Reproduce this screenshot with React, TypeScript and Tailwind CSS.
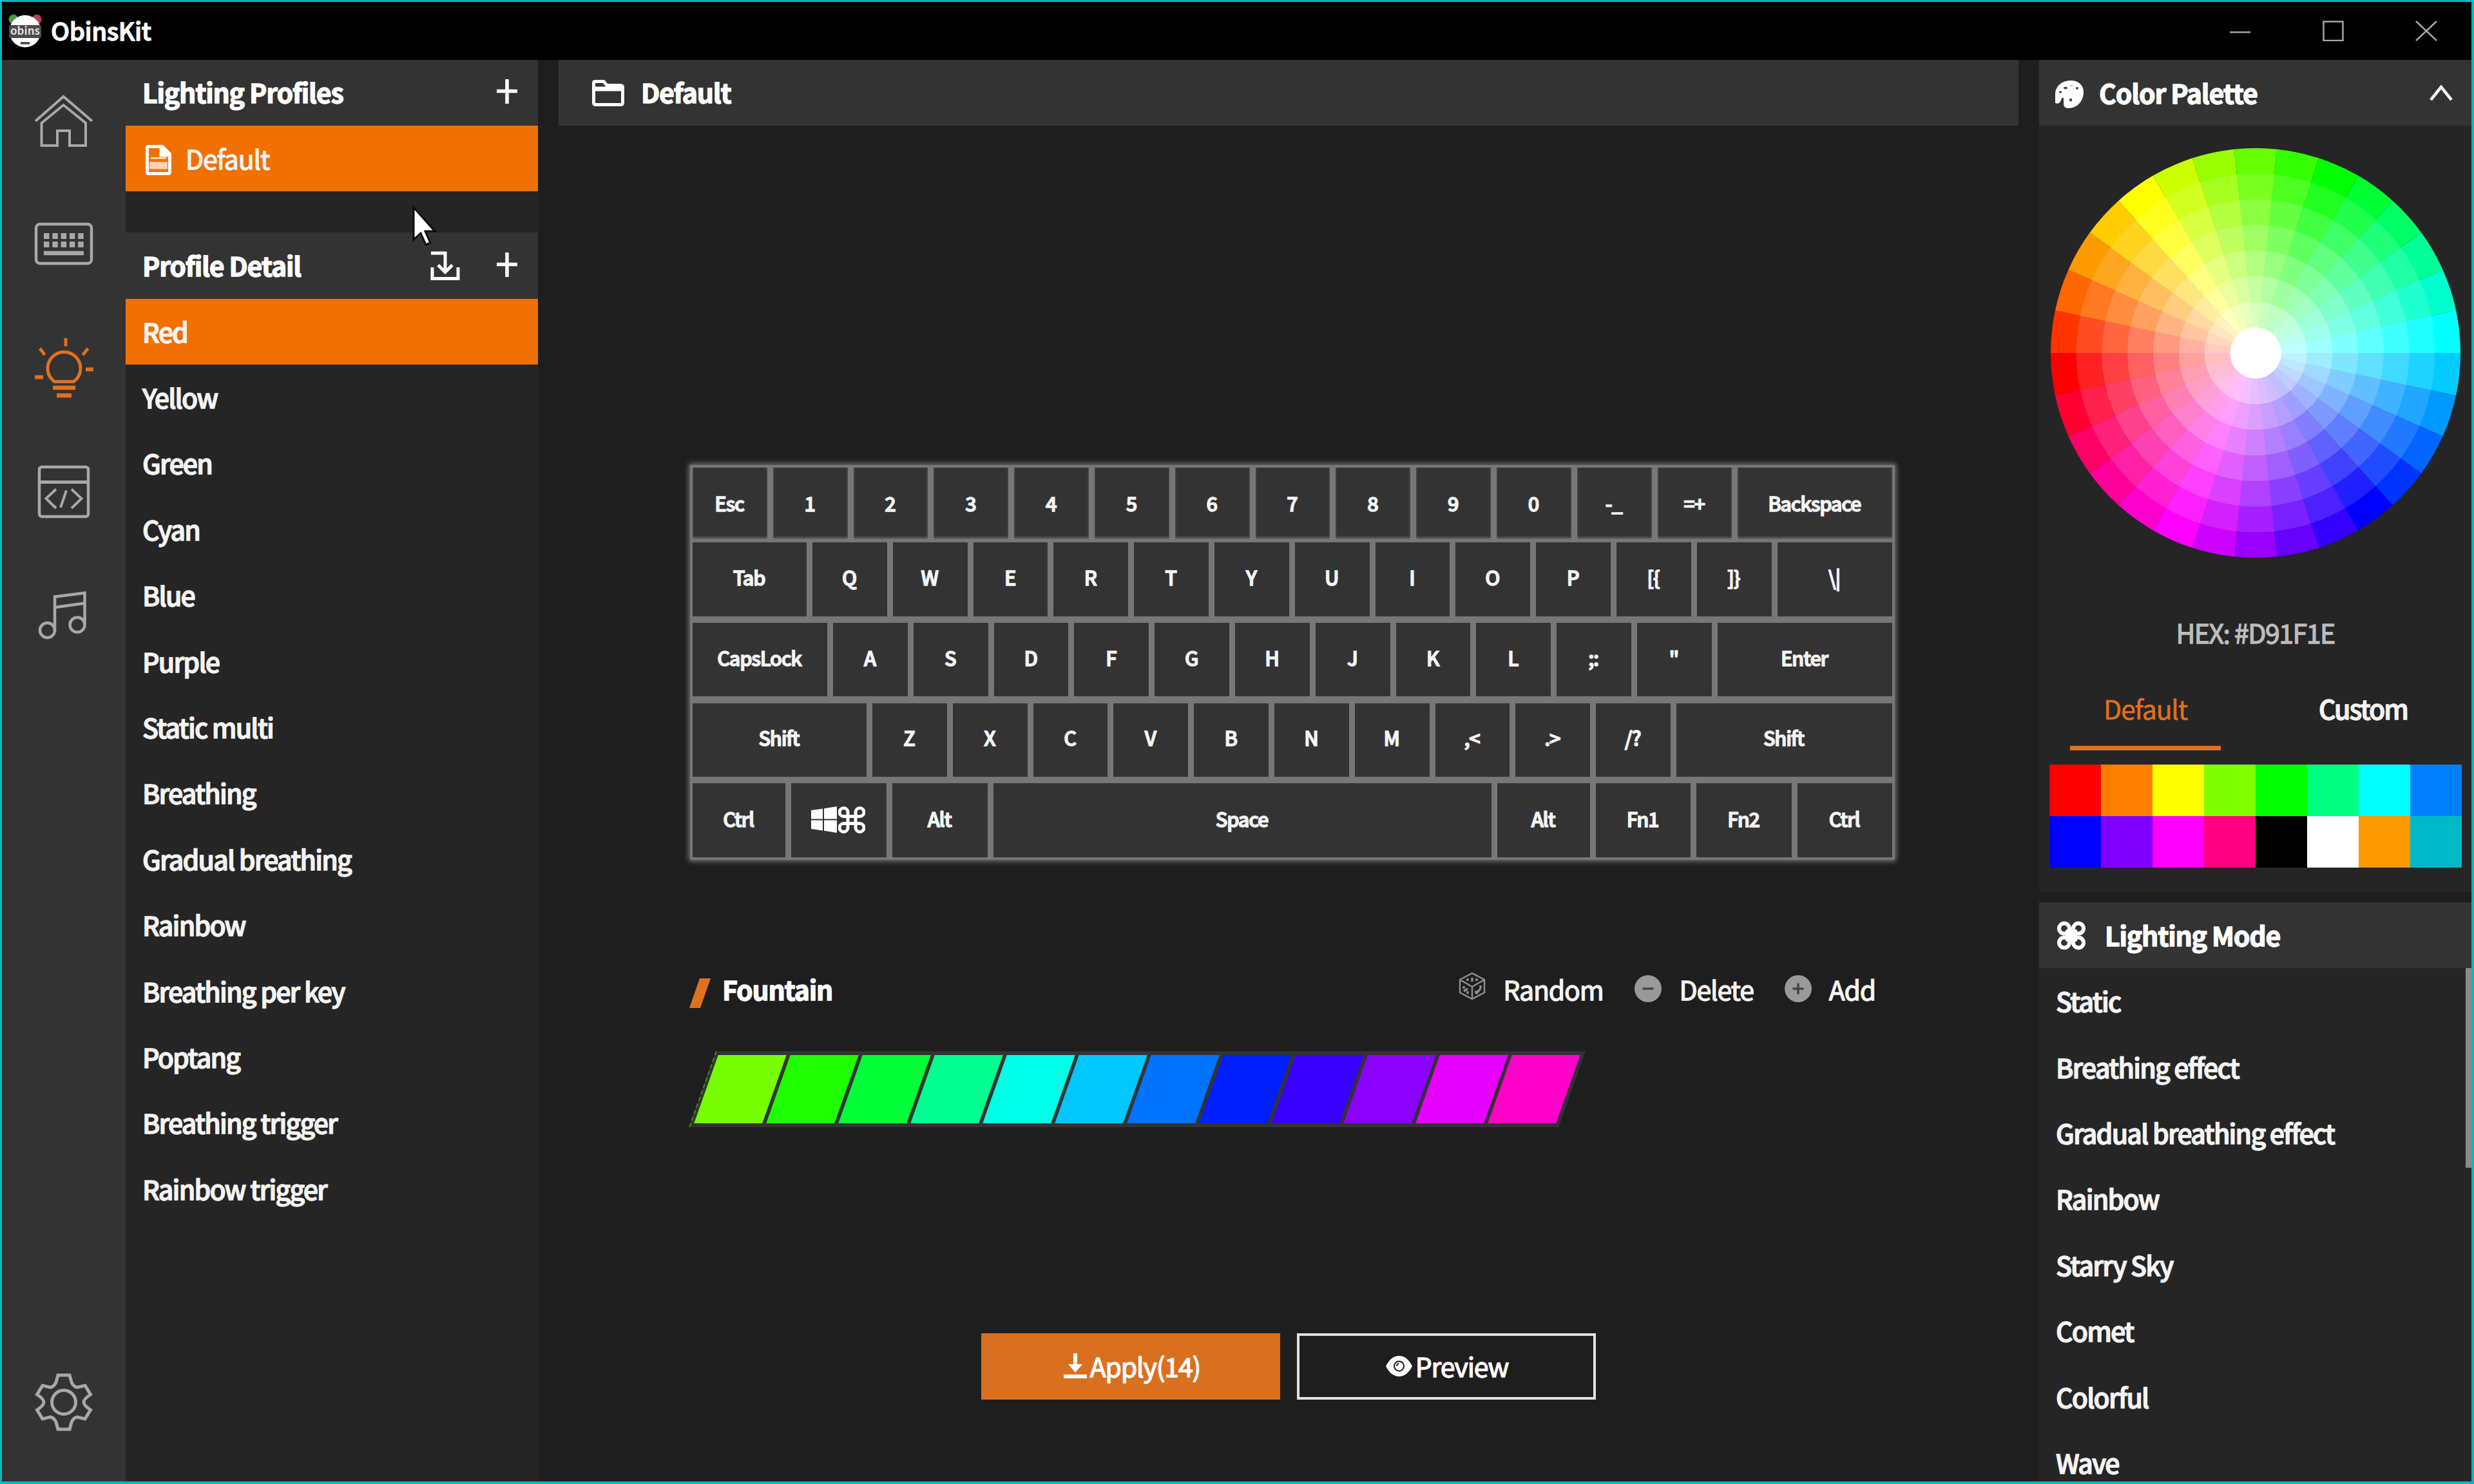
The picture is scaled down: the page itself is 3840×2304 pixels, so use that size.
import { useState } from "react";
import type { ReactNode } from "react";

const profileDetails = [
  "Red",
  "Yellow",
  "Green",
  "Cyan",
  "Blue",
  "Purple",
  "Static multi",
  "Breathing",
  "Gradual breathing",
  "Rainbow",
  "Breathing per key",
  "Poptang",
  "Breathing trigger",
  "Rainbow trigger",
];

const lightingModes = [
  "Static",
  "Breathing effect",
  "Gradual breathing effect",
  "Rainbow",
  "Starry Sky",
  "Comet",
  "Colorful",
  "Wave",
];

const swatches = [
  "bg-[#ff0000]", "bg-[#ff8000]", "bg-[#ffff00]", "bg-[#80ff00]",
  "bg-[#00ff00]", "bg-[#00ff80]", "bg-[#00ffff]", "bg-[#0080ff]",
  "bg-[#0000ff]", "bg-[#8000ff]", "bg-[#ff00ff]", "bg-[#ff0080]",
  "bg-black", "bg-white", "bg-[#ff9900]", "bg-[#00b8c8]",
];

const fountain = [
  "bg-[#77ff00]", "bg-[#1eff00]", "bg-[#00ff37]", "bg-[#00ff91]",
  "bg-[#00ffe6]", "bg-[#00c8ff]", "bg-[#0073ff]", "bg-[#001eff]",
  "bg-[#3700ff]", "bg-[#8c00ff]", "bg-[#e600ff]", "bg-[#ff00c8]",
];

type KeyDef = { label: string; w?: string };

const U = "w-[115.8px]";

const keyRows: KeyDef[][] = [
  [
    ...["Esc", "1", "2", "3", "4", "5", "6", "7", "8", "9", "0", "-_", "=+"].map((label) => ({ label })),
    { label: "Backspace", w: "flex-1" },
  ],
  [
    { label: "Tab", w: "w-[177px]" },
    ...["Q", "W", "E", "R", "T", "Y", "U", "I", "O", "P", "[{", "]}"].map((label) => ({ label })),
    { label: "\\|", w: "flex-1" },
  ],
  [
    { label: "CapsLock", w: "w-[209px]" },
    ...["A", "S", "D", "F", "G", "H", "J", "K", "L", ";:", "\""].map((label) => ({ label })),
    { label: "Enter", w: "flex-1" },
  ],
  [
    { label: "Shift", w: "w-[270px]" },
    ...["Z", "X", "C", "V", "B", "N", "M", ",<", ".>", "/?"].map((label) => ({ label })),
    { label: "Shift", w: "flex-1" },
  ],
  [
    { label: "Ctrl", w: "w-[144px]" },
    { label: "Win", w: "w-[148px]" },
    { label: "Alt", w: "w-[148px]" },
    { label: "Space", w: "flex-1" },
    { label: "Alt", w: "w-[144px]" },
    { label: "Fn1", w: "w-[147px]" },
    { label: "Fn2", w: "w-[148px]" },
    { label: "Ctrl", w: "w-[147px]" },
  ],
];

const PlusIcon = () => (
  <svg className="w-8 h-10 mb-1" viewBox="0 0 32 40" stroke="#fff" strokeWidth="5.500">
    <path d="M16 1v38M0 19.500h32" />
  </svg>
);

const CommandIcon = ({ className, stroke }: { className: string; stroke: number }) => (
  <svg className={className} viewBox="0 0 42 42" fill="none" stroke="#fff" strokeWidth={stroke}>
    <path d="M15 9v24a6.500 6.500 0 1 1-6.500-6.500h25a6.500 6.500 0 1 1-6.500 6.500v-24a6.500 6.500 0 1 1 6.500 6.500h-25a6.500 6.500 0 1 1 6.500-6.500z" />
  </svg>
);

const CloverIcon = () => (
  <svg className="w-[44px] h-[45px]" viewBox="0 0 44 45" fill="none" stroke="#fff" strokeWidth="6">
    <circle cx="11" cy="11.500" r="8" />
    <circle cx="33" cy="11.500" r="8" />
    <circle cx="11" cy="33.500" r="8" />
    <circle cx="33" cy="33.500" r="8" />
    <path d="M16 16.500h12v12h-12z" fill="#fff" />
  </svg>
);

const navIcons: { name: string; color: string; icon: ReactNode }[] = [
  {
    name: "home",
    color: "text-[#a8a8a8]",
    icon: (
      <g strokeWidth="4">
        <path d="M4 49 47.500 11 92 49" />
        <path d="M13.500 52 47.500 24 82 52V87H57V64H38V87H13.500Z" />
      </g>
    ),
  },
  {
    name: "keyboard",
    color: "text-[#a8a8a8]",
    icon: (
      <g strokeWidth="4.500">
        <rect x="5" y="17" width="86" height="61" rx="6" />
        <path d="M17 35.500h62M17 48.500h62" strokeWidth="9" strokeDasharray="8.500 4.800" />
        <path d="M17 62h62" strokeWidth="6.500" />
      </g>
    ),
  },
  {
    name: "lighting",
    color: "text-[#e0711f]",
    icon: (
      <g strokeWidth="5">
        <path d="M33.500 69.500A25.500 25.500 0 1 1 63.500 69.500Z" />
        <path d="M31 79h35M37 91h23" strokeWidth="6.500" />
        <path d="M51 2v12.500M11 18l7.500 10M85.500 18l-8 10" />
        <path d="M82 50.500h12M3 62.500h13" strokeWidth="6" />
      </g>
    ),
  },
  {
    name: "macro",
    color: "text-[#a8a8a8]",
    icon: (
      <g strokeWidth="4.500">
        <rect x="10" y="10" width="76" height="77" rx="4" />
        <path d="M10 33.500h76" strokeWidth="5" />
        <path d="M36 44.500 20.500 59 36 74M60 44.500 75.500 59 60 74M52 46.500 43 73" strokeWidth="4" />
      </g>
    ),
  },
  {
    name: "music",
    color: "text-[#a8a8a8]",
    icon: (
      <g strokeWidth="4.500">
        <circle cx="22.500" cy="71.500" r="11.500" />
        <circle cx="69" cy="63" r="11.500" />
        <path d="M34 72V19.500L80.500 13.500V63M34 36 80.500 29.500" />
      </g>
    ),
  },
];

const Rail = () => (
  <div className="w-[192px] h-full shrink-0 bg-[#333333] flex flex-col items-center justify-between pb-[27px]">
    <div className="flex flex-col -mt-[2px]">
      {navIcons.map((n) => (
        <div key={n.name} className="h-48 flex items-center justify-center">
          <svg className={`w-24 h-24 ${n.color}`} viewBox="0 0 96 96" fill="none" stroke="currentColor">
            {n.icon}
          </svg>
        </div>
      ))}
    </div>
    <div className="h-48 flex items-center">
      <svg className="w-24 h-24 text-[#a8a8a8]" viewBox="0 0 96 96" fill="none" stroke="currentColor" strokeWidth="5">
        <path d="M39 6H57L60 17Q63 24 69 25L81 22 89.500 36Q79 43 79 48 79 53 89.500 60L81 74 69 71Q63 72 60 79L57 90H39L36 79Q33 72 27 71L15 74 6.500 60Q17 53 17 48 17 43 6.500 36L15 22 27 25Q33 24 36 17Z" />
        <circle cx="48" cy="48" r="18.500" />
      </svg>
    </div>
  </div>
);

// 30 hues by 8 rings, each ring one step closer to white
const ColorWheel = () => {
  const R = 318;
  const rings = [0, 1, 2, 3, 4, 5, 6];
  const point = (deg: number, r: number) => {
    const a = (deg * Math.PI) / 180;
    return `${(R + r * Math.cos(a)).toFixed(2)} ${(R + r * Math.sin(a)).toFixed(2)}`;
  };
  return (
    <svg className="w-[636px] h-[636px]" viewBox="0 0 636 636">
      {rings.map((ring) => {
        const r = R * (1 - ring / 8);
        return Array.from({ length: 30 }, (_, i) => {
          const start = 168 + i * 12;
          return (
            <path
              key={`${ring}-${i}`}
              d={`M${R} ${R}L${point(start, r)}A${r} ${r} 0 0 1 ${point(start + 12, r)}Z`}
              fill={`hsl(${i * 12} 100% ${50 + ring * 6.25}%)`}
            />
          );
        });
      })}
      <circle cx={R} cy={R} r={R / 8} fill="#fff" />
    </svg>
  );
};

const Keyboard = () => (
  <div className="w-[1870px] bg-[#777777] p-1 flex flex-col shadow-[0_0_8px_2px_#777777]">
    {keyRows.map((row, r) => (
      <div key={r} className={`flex gap-[9px] ${r === 0 ? "h-[111px] mb-[5px]" : r === 4 ? "h-[115px]" : "h-[114.500px] mb-[10.300px]"}`}>
        {row.map((k, i) => (
          <div
            key={i}
            className={`${k.w ?? U} bg-[#333333] text-[30.700px] leading-none tracking-[-1.250px] font-medium [-webkit-text-stroke:1.500px] flex items-center justify-center pr-[2px] ${r === 0 ? "pb-[1px] shadow-[inset_0_-3px_4px_-1px_#777777]" : "pb-[6px]"}`}
          >
            {k.label === "Win" ? (
              <div className="flex items-center gap-[2px] pt-1">
                <svg className="w-10 h-[41px]" viewBox="0 0 40 41" fill="#fff">
                  <path d="M0 6 18 3.500V19.500H0ZM20 3.200 40 0V19.500H20ZM0 21.500H18V37.500L0 35ZM20 21.500H40V41L20 37.800Z" />
                </svg>
                <CommandIcon className="w-[42px] h-[42px]" stroke={5} />
              </div>
            ) : (
              k.label
            )}
          </div>
        ))}
      </div>
    ))}
  </div>
);

const App = () => {
  const [detail, setDetail] = useState("Red");

  return (
    <div className="relative w-[3840px] h-[2304px] overflow-hidden border-[3px] border-b-4 border-r-4 border-[#00b8c4] bg-[#1e1e1e] flex flex-col font-['Noto_Sans_CJK_SC',sans-serif] text-[41px] leading-none tracking-[-1.180px] [-webkit-text-stroke:1.300px] text-[#f4f4f4]">
      {/* title bar */}
      <div className="h-[90px] shrink-0 bg-black flex items-center justify-between pl-[10px] pr-[53px]">
        <div className="flex items-center">
          <svg className="w-[52px] h-[52px]" viewBox="0 0 52 52">
            <circle cx="8" cy="8" r="7.500" fill="#4b9a45" />
            <circle cx="44" cy="8" r="7.500" fill="#b8405c" />
            <ellipse cx="26" cy="26.500" rx="24.500" ry="25" fill="#fff" />
            <rect x="1" y="17" width="50" height="20" rx="2" fill="#4a4a4a" />
            <text x="26" y="32" textAnchor="middle" fontSize="17" letterSpacing="0" fontWeight="bold" fill="#ddd" stroke="none">obins</text>
            <path d="M19 45h14" stroke="#444" strokeWidth="3.500" />
          </svg>
          <span className="ml-[14px] mb-[3px] text-[38.500px] tracking-[-0.400px] font-medium text-white">ObinsKit</span>
        </div>
        <svg className="w-[322px] h-8" viewBox="0 0 322 32" fill="none" stroke="#a6a6a6" strokeWidth="2.500">
          <path d="M0 18h32" />
          <rect x="145.500" y="1.500" width="30" height="29.500" />
          <path d="M289 1l32 30M321 1l-32 30" />
        </svg>
      </div>

      <div className="flex flex-1 min-h-0">
        <Rail />

        {/* profiles */}
        <div className="w-[640px] h-full shrink-0 bg-[#252525]">
          <div className="h-[102px] bg-[#333333] flex items-center justify-between pl-[26px] pr-[32px]">
            <span className="font-bold text-white mb-[3px]">Lighting Profiles</span>
            <PlusIcon />
          </div>
          <div className="h-[102px] bg-[#f07000] flex items-center pl-[31px]">
            <svg className="w-10 h-[47px] mt-1" viewBox="0 0 40 47" fill="none" stroke="#fff" strokeWidth="5">
              <path d="M2.500 5Q2.500 2.500 5 2.500H26L37.500 14V42Q37.500 44.500 35 44.500H5Q2.500 44.500 2.500 42Z" />
              <path d="M24 1V16H39Z" fill="#fff" />
              <path d="M8 20.500h24" strokeWidth="3" strokeOpacity="0.700" />
              <path d="M6 32h28" strokeWidth="11" strokeOpacity="0.700" />
            </svg>
            <span className="ml-[22px] mb-[2px]">Default</span>
          </div>
          <div className="h-[64px]" />
          <div className="h-[103px] bg-[#333333] flex items-center pl-[26px] pr-[32px]">
            <span className="font-bold text-white flex-1 mb-[2px]">Profile Detail</span>
            <svg className="w-[46px] h-[46px] mr-[57px] mt-0" viewBox="0 0 46 46" fill="none" stroke="#fff" strokeWidth="5">
              <path d="M1 3H23V32M12 21.500 23 32.500 34 21.500" />
              <path d="M3 25V42.500H43V25" />
            </svg>
            <PlusIcon />
          </div>
          {profileDetails.map((p) => (
            <div
              key={p}
              onClick={() => setDetail(p)}
              className={`h-[102.400px] flex items-center pl-[26px] pb-[2px] font-medium tracking-[-1.800px] ${p === detail ? "bg-[#f07000]" : ""}`}
            >
              {p}
            </div>
          ))}
        </div>

        {/* editor */}
        <div className="flex-1 min-w-0 pl-8 pr-[32px] flex flex-col">
          <div className="h-[102px] shrink-0 bg-[#333333] flex items-center pl-[52px]">
            <svg className="w-[50px] h-[41px]" viewBox="0 0 50 41" fill="none" stroke="#fff" strokeWidth="5">
              <path d="M2.500 5Q2.500 2.500 5 2.500H18L23 8.500H44Q47.500 8.500 47.500 12V35Q47.500 38.500 44 38.500H6Q2.500 38.500 2.500 35Z" />
              <path d="M3 14h44" strokeWidth="7" />
            </svg>
            <span className="ml-[26px] mb-[3px] font-bold text-white">Default</span>
          </div>

          <div className="mt-[527px] ml-[204px]">
            <Keyboard />
          </div>

          <div className="mt-[170px] ml-[203px] w-[1841px] h-[60px] flex items-center">
            <svg className="w-[33px] h-[46px] mt-[13px]" viewBox="0 0 33 46" fill="#e0711f">
              <path d="M16 0H33L17 46H0Z" />
            </svg>
            <span className="ml-[18px] font-bold text-white flex-1">Fountain</span>
            <svg className="w-[42px] h-[44px] -mt-2" viewBox="0 0 42 44" fill="none" stroke="#8c8c8c" strokeWidth="2.500">
              <path d="M21 2 40 12V32L21 42 2 32V12ZM2 12 21 23 40 12M21 23V42" />
              <path d="M21 9v6M12 12h4M26 12h4M8 22v4M14 30v4M8 30l6-4M27 29v5M34 21v5M27 34l7-8" strokeWidth="3.500" />
            </svg>
            <span className="ml-[27px] mr-[49px]">Random</span>
            <svg className="w-[42px] h-[42px]" viewBox="0 0 42 42" stroke="#444" strokeWidth="3.500">
              <circle cx="21" cy="21" r="21" fill="#999" stroke="none" />
              <path d="M12.500 21h17" />
            </svg>
            <span className="ml-[27px] mr-[48px]">Delete</span>
            <svg className="w-[42px] h-[42px]" viewBox="0 0 42 42" stroke="#444" strokeWidth="3.500">
              <circle cx="21" cy="21" r="21" fill="#999" stroke="none" />
              <path d="M12.500 21h17M21 12.500v17" />
            </svg>
            <span className="ml-[27px]">Add</span>
          </div>

          <div className="mt-[67px] ml-[223px] w-[1350px] h-[118px] shrink-0 bg-[#333333] border-l-2 border-dashed border-[#4a8a1a] py-[6px] pl-1 pr-[6px] flex gap-[6px] -skew-x-[19.500deg]">
            {fountain.map((c) => (
              <div key={c} className={`flex-1 ${c}`} />
            ))}
          </div>

          <div className="mt-[320px] ml-[656px] flex gap-[26px]">
            <button className="w-[464px] h-[103px] bg-[#d9701f] text-white flex items-center justify-center gap-[5px] pb-[2px] pl-1">
              <svg className="w-9 h-[39px]" viewBox="0 0 36 39" fill="#fff">
                <path d="M15 0h6v17h8L18 30 7 17h8ZM0 33h36v6H0Z" />
              </svg>
              Apply(14)
            </button>
            <button className="w-[464px] h-[103px] border-[4px] border-[#e2e2e2] text-white flex items-center justify-center gap-[5px] pb-[2px] pl-[2px]">
              <svg className="w-[41px] h-8" viewBox="0 0 41 32">
                <path d="M0 16Q8 0 20.500 0T41 16Q33 32 20.500 32T0 16Z" fill="#fff" />
                <circle cx="20.500" cy="16" r="7.500" fill="none" stroke="#1e1e1e" strokeWidth="2" />
                <path d="M17 16a4 4 0 0 1 3.500-4" fill="none" stroke="#1e1e1e" strokeWidth="2" />
              </svg>
              Preview
            </button>
          </div>
        </div>

        {/* palette and modes */}
        <div className="w-[671px] h-full shrink-0 flex flex-col">
          <div className="h-[1292px] shrink-0 bg-[#252525] flex flex-col items-center">
            <div className="w-full h-[102px] bg-[#333333] flex items-center pl-[25px] pr-[29px]">
              <svg className="w-11 h-[43px] mt-1" viewBox="0 0 44 43">
                <path d="M0 35V22C0 9 10 0 24 0 36 0 44 7 44 18 44 31 35 43 20 43 15 43 13 40 13 36V28Q12 25 10 28L8 33Q5 37 0 35Z" fill="#fff" />
                <g fill="#444">
                  <ellipse cx="8" cy="18" rx="2.200" ry="1.800" />
                  <ellipse cx="16" cy="11.500" rx="3" ry="1.800" />
                  <ellipse cx="25" cy="8" rx="2.500" ry="1.300" fill="#ccc" />
                  <ellipse cx="34" cy="12" rx="2" ry="2" />
                  <ellipse cx="24" cy="30" rx="2.200" ry="2.500" />
                </g>
              </svg>
              <span className="ml-[24px] mb-[2px] font-bold text-white flex-1">Color Palette</span>
              <svg className="w-[36px] h-[26px]" viewBox="0 0 36 26" fill="none" stroke="#fff" strokeWidth="4.500">
                <path d="M2 24 18 4 34 24" />
              </svg>
            </div>
            <div className="mt-[35px]">
              <ColorWheel />
            </div>
            <div className="mt-[95px] tracking-[-1.500px] text-[#bcbcbc]">HEX: #D91F1E</div>
            <div className="mt-[59px] w-[572px] self-start ml-[48px] flex justify-between">
              <div className="w-[234px] h-[104px] border-b-[7px] border-[#e0711f] text-[#e0711f] [-webkit-text-stroke:0.500px] flex items-center justify-center pb-[20px]">Default</div>
              <div className="w-[234px] h-[104px] flex items-center justify-center pb-[27px] font-medium tracking-[-1.900px]">Custom</div>
            </div>
            <div className="mt-[22px] w-[640px] grid grid-cols-8">
              {swatches.map((s) => (
                <div key={s} className={`h-20 ${s}`} />
              ))}
            </div>
          </div>
          <div className="mt-4 h-[102px] shrink-0 bg-[#333333] flex items-center pl-[28px]">
            <CloverIcon />
            <span className="ml-[30px] mb-[1px] font-bold text-white">Lighting Mode</span>
          </div>
          <div className="relative flex-1 min-h-0 overflow-hidden bg-[#252525]">
            {lightingModes.map((m) => (
              <div key={m} className="h-[102.400px] flex items-center pl-[26px] pb-[1px] font-medium tracking-[-1.780px]">{m}</div>
            ))}
            <div className="absolute right-0 top-0 w-[9px] h-[310px] bg-[#8a8a8a]" />
          </div>
        </div>
      </div>

      {/* mouse pointer */}
      <svg className="absolute left-[637px] top-[316px] w-[38px] h-[64px]" viewBox="0 0 38 64">
        <path d="M2 3V53L13 43 21 61 28 58 20 40H35Z" fill="#fff" stroke="#0a0a14" strokeWidth="3" />
      </svg>
    </div>
  );
};

export default App;
